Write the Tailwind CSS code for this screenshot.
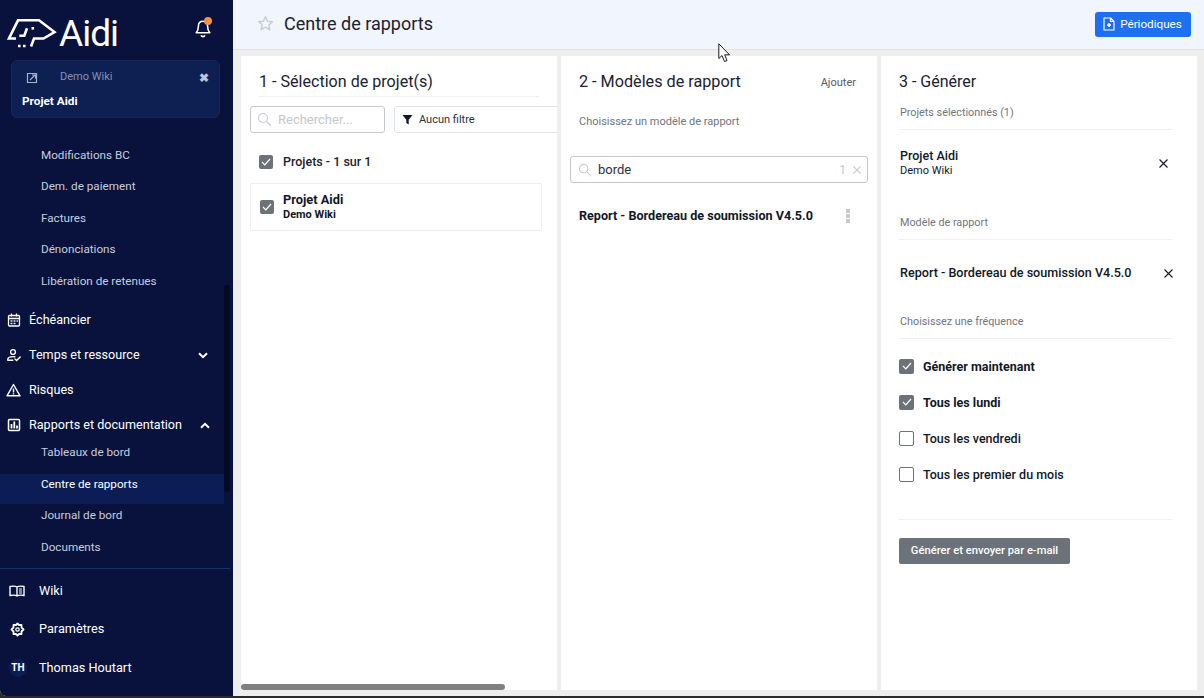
<!DOCTYPE html>
<html lang="fr">
<head>
  <meta charset="UTF-8" />
  <title>Centre de rapports</title>
  <script src="https://cdn.jsdelivr.net/npm/@tailwindcss/browser@4"></script>
</head>
<body class="bg-[#2b2b2b] font-['Roboto',sans-serif] text-[#111827]">
<div class="relative w-[1204px] h-[698px] overflow-hidden">
  <div class="flex h-[696px] bg-[#eeeeee] rounded-bl-[6px] overflow-hidden">

    <!-- Sidebar -->
    <aside class="w-[233px] shrink-0 h-full bg-[#08123d] text-white flex flex-col relative">
      <div class="h-[60px] shrink-0 flex items-start pl-[7px] pr-[21px] pt-[16px] justify-between">
        <div class="flex items-start gap-[2px]">
          <svg width="50" height="33" viewBox="0 0 50 33" fill="none" stroke="white" stroke-width="2.600" stroke-linejoin="miter" stroke-linecap="butt">
            <path d="M9 22.500H2L11 4.300H32L47.500 16L36.500 22.500H27L24 30.500"/>
            <path d="M20 12.300L17.300 19.700H12.300"/>
            <path d="M24.500 12.300h2.600" stroke-width="2.600"/>
            <path d="M11 30h2.600M16 30h2.600" stroke-width="2.600"/>
          </svg>
          <span class="text-[37px] leading-[36px] tracking-[-1px] font-normal">Aidi</span>
        </div>
        <div class="relative mt-[3px] mr-[1px]">
          <svg width="16" height="19" viewBox="0 0 16 19" fill="none" stroke="white" stroke-width="1.600" stroke-linejoin="round"><path d="M8 2.200c-3 0-4.600 2.200-4.600 5 0 3.600-1 5.300-2.200 6.500h13.600c-1.200-1.200-2.200-2.900-2.200-6.500 0-2.800-1.600-5-4.600-5z"/><path d="M6.200 16.200c.3 1 1 1.500 1.800 1.500s1.500-.5 1.800-1.500" stroke-width="1.800"/></svg>
          <span class="absolute -top-[2px] right-[-1px] w-[8px] h-[8px] rounded-full bg-[#f5914a]"></span>
        </div>
      </div>

      <div class="ml-[11px] mr-[13px] h-[58px] shrink-0 rounded-[6px] bg-[#0e1f52] border border-[#12265c] pl-[10px] pr-[10px] pt-[8px]">
        <div class="flex items-center h-[17px]">
          <svg width="12" height="12" viewBox="0 0 12 12" fill="none" stroke="#a8b2cc" stroke-width="1.200" class="ml-[4px]"><path d="M10.500 1.500h-9v9h9z" stroke-width="1.200"/><path d="M4 8l5-5M6 3h3.500v3.500" stroke-width="1.100"/></svg>
          <span class="ml-[22px] text-[11px] text-[#8792b1]">Demo Wiki</span>
          <span class="ml-auto text-[#b9c3db] text-[12px] leading-none font-bold">✖</span>
        </div>
        <div class="text-[11.800px] font-bold mt-[7px] leading-[16px]">Projet Aidi</div>
      </div>

      <nav class="flex-1 pt-[22px] text-[11.700px] text-[#c6cede]">
        <div class="h-[31.500px] flex items-center pl-[41px]">Modifications BC</div>
        <div class="h-[31.500px] flex items-center pl-[41px]">Dem. de paiement</div>
        <div class="h-[31.500px] flex items-center pl-[41px]">Factures</div>
        <div class="h-[31.500px] flex items-center pl-[41px]">Dénonciations</div>
        <div class="h-[31.500px] flex items-center pl-[41px]">Libération de retenues</div>

        <div class="mt-[5px] text-[12.600px] text-white">
          <div class="h-[35px] flex items-center pl-[7px]">
            <svg class="w-[14px] h-[14px]" viewBox="0 0 14 14" fill="none" stroke="white" stroke-width="1.300"><rect x="1.500" y="2.500" width="11" height="10.500" rx="1"/><path d="M1.500 5.500h11M4.500 0.500v3M9.500 0.500v3"/><path d="M3.500 8h2M6.500 8h2M9.500 8h1.500M3.500 10.500h2M6.500 10.500h2" stroke="#d9dfee"/></svg>
            <span class="ml-[8px]">Échéancier</span>
          </div>
          <div class="h-[35px] flex items-center pl-[7px]">
            <svg class="w-[14px] h-[14px]" viewBox="0 0 14 14" fill="none" stroke="white" stroke-width="1.400" stroke-linecap="round"><circle cx="6" cy="4" r="2.400"/><path d="M0.800 11.500c0-2 2.400-2.900 5.200-2.900 .8 0 1.200.1 1.800.2"/><path d="M0.800 12.200h5M8 11l1.600 1.500L13.200 9"/></svg>
            <span class="ml-[8px]">Temps et ressource</span>
            <svg class="ml-auto mr-[25px]" width="10" height="7" viewBox="0 0 10 7" fill="none" stroke="white" stroke-width="2"><path d="M1 1.200l4 4 4-4"/></svg>
          </div>
          <div class="h-[35px] flex items-center pl-[6px]">
            <svg class="w-[15px] h-[14px]" viewBox="0 0 15 14" fill="none" stroke="white" stroke-width="1.400" stroke-linejoin="round"><path d="M7.500 1.500L14 12.800H1z"/><path d="M7.500 5.500v4M7.500 10.200v1.200"/></svg>
            <span class="ml-[8px]">Risques</span>
          </div>
          <div class="h-[35px] flex items-center pl-[7px]">
            <svg class="w-[14px] h-[14px]" viewBox="0 0 14 14" fill="none" stroke="white" stroke-width="1.500"><rect x="1.500" y="1.500" width="11" height="11" rx="1"/><path d="M4.500 10.500V6M7.300 10.500V3.500M10 10.500V7.500" stroke-width="1.800"/></svg>
            <span class="ml-[8px]">Rapports et documentation</span>
            <svg class="ml-auto mr-[23px]" width="10" height="7" viewBox="0 0 10 7" fill="none" stroke="white" stroke-width="2"><path d="M1 5.800l4-4 4 4"/></svg>
          </div>
        </div>
        <div class="h-[21px] flex items-center pl-[41px]">Tableaux de bord</div>
        <div class="h-[30px] mt-[10px] mr-[9px] pb-[8px] flex items-center pl-[41px] bg-[#0c1d55] text-white">Centre de rapports</div>
        <div class="h-[28px] pb-[4px] flex items-center pl-[41px]">Journal de bord</div>
        <div class="h-[31.500px] pt-[1px] flex items-center pl-[41px]">Documents</div>
      </nav>

      <div class="h-[128px] shrink-0 mr-[3px] border-t border-[#15306d] text-[12.700px] text-white">
        <div class="h-[38px] mt-[3px] flex items-center pl-[9px]">
          <svg class="w-[16px] h-[14px]" viewBox="0 0 16 14" fill="none" stroke="white" stroke-width="1.400"><path d="M8 3C6.500 2 3.500 2 1 2.500v9c2.500-.5 5.500-.5 7 .5 1.500-1 4.500-1 7-.5v-9C12.500 2 9.500 2 8 3zM8 3v9"/><path d="M10 5h3M10 7h3M10 9h3" stroke-width="1"/></svg>
          <span class="ml-[14px]">Wiki</span>
        </div>
        <div class="h-[38px] flex items-center pl-[10px]">
          <svg class="w-[15px] h-[15px]" viewBox="0 0 15 15" fill="none" stroke="white" stroke-width="1.800" stroke-linejoin="round"><path d="M7.500 1.500l1.500 1.500h2.500v2.500L13.500 7.500l-2 2V12H9l-1.500 1.500L6 12H3.500V9.500l-2-2 2-2V3H6z"/><circle cx="7.500" cy="7.500" r="1.700" stroke-width="1.300"/></svg>
          <span class="ml-[14px]">Paramètres</span>
        </div>
        <div class="h-[39px] flex items-center pl-[9px]">
          <span class="w-[18px] h-[18px] rounded-full bg-[#0d1d52] flex items-center justify-center text-[10px] font-bold">TH</span>
          <span class="ml-[12px]">Thomas Houtart</span>
        </div>
      </div>

      <!-- scrollbar thumb -->
      <div class="absolute left-[224px] top-[285px] w-[6px] h-[207px] bg-[#040a24] rounded-full"></div>
    </aside>

    <!-- Main -->
    <main class="flex-1 min-w-0 flex flex-col relative">
      <header class="h-[50px] shrink-0 bg-[#f1f5fd] border-b border-[#e2e2e4] flex items-center pl-[24px] pr-[13px] pb-[2px]">
        <svg width="17" height="17" viewBox="0 0 24 24" fill="none" stroke="#c9ccd3" stroke-width="2" stroke-linejoin="round"><path d="M12 2.500l2.900 6.300 6.900.8-5.100 4.700 1.400 6.800L12 17.100 5.900 20.600l1.400-6.800L2.200 9.600l6.900-.8z"/></svg>
        <h1 class="ml-[10px] text-[18px] font-normal text-[#1c2130]">Centre de rapports</h1>
        <button class="ml-auto mt-[1px] h-[25px] w-[96px] pr-[1px] bg-[#1f6ff2] rounded-[3px] text-white text-[11.700px] flex items-center justify-center gap-[5px]">
          <svg width="12" height="14" viewBox="0 0 12 14" fill="none" stroke="white" stroke-width="1.200" stroke-linejoin="round"><path d="M1 1h6.500L11 4.500V13H1z"/><path d="M7.500 1v3.500H11"/><path d="M6 6v4M4 8h4" stroke-width="1.500"/></svg>
          <span class="pt-[1px]">Périodiques</span>
        </button>
      </header>

      <div class="flex-1 flex gap-[4px] pl-[8px] pt-[6px]">

        <!-- Panel 1 -->
        <section class="w-[316px] h-[634px] bg-white px-[9px] overflow-hidden">
          <h2 class="mx-[9px] text-[16.100px] h-[41px] pt-[15px] leading-[21px] font-normal text-[#1c2130] border-b border-[#eef0f2]">1 - Sélection de projet(s)</h2>
          <div class="flex gap-[9px] mt-[9px] w-[330px]">
            <div class="w-[135px] h-[27px] border border-[#c6c9d0] rounded-[3px] flex items-center pl-[6px]">
              <svg width="15" height="15" viewBox="0 0 15 15" fill="none" stroke="#c9ccd3" stroke-width="1.200"><circle cx="6" cy="6" r="4.500"/><path d="M9.500 9.500l4.500 4.500"/></svg>
              <span class="ml-[6px] text-[13px] text-[#c4c7cd]">Rechercher...</span>
            </div>
            <div class="flex-1 h-[27px] border border-[#e2e3e8] rounded-[3px] flex items-center pl-[7px]">
              <svg width="11" height="11" viewBox="0 0 11 11" fill="#111827"><path d="M0.500 1h10L6.700 5.800V10.500L4.300 9V5.800z"/></svg>
              <span class="ml-[6px] pt-[2px] text-[11px] text-[#2a3040]">Aucun filtre</span>
            </div>
          </div>
          <div class="flex items-center h-[20px] mt-[19px] ml-[9px]">
            <span class="w-[14px] h-[14px] rounded-[2px] bg-[#6c7279] flex items-center justify-center"><svg width="10" height="8" viewBox="0 0 10 8" fill="none" stroke="white" stroke-width="1.200"><path d="M1 4l2.800 2.800L9 1"/></svg></span>
            <span class="ml-[10px] text-[12.500px] font-medium text-[#1c2130]">Projets - 1 sur 1</span>
          </div>
          <div class="mt-[11px] w-[292px] h-[48px] border border-[#eeeeef] flex items-center pl-[9px]">
            <span class="w-[14px] h-[14px] rounded-[2px] bg-[#6c7279] flex items-center justify-center"><svg width="10" height="8" viewBox="0 0 10 8" fill="none" stroke="white" stroke-width="1.200"><path d="M1 4l2.800 2.800L9 1"/></svg></span>
            <div class="ml-[9px]">
              <div class="text-[12.800px] font-bold leading-[14px]">Projet Aidi</div>
              <div class="text-[11px] font-bold leading-[15px]">Demo Wiki</div>
            </div>
          </div>
        </section>

        <!-- Panel 2 -->
        <section class="w-[316px] h-[634px] bg-white px-[9px]">
          <div class="mx-[9px] flex justify-between h-[41px] pt-[15px] pr-[3px]">
            <h2 class="text-[16.200px] leading-[21px] font-normal text-[#1c2130]">2 - Modèles de rapport</h2>
            <span class="text-[11px] text-[#555b66] leading-[22px] pt-[1px]">Ajouter</span>
          </div>
          <div class="mx-[9px] mt-[17px] text-[11px] leading-[16px] text-[#6f7680]">Choisissez un modèle de rapport</div>
          <div class="mt-[26px] h-[27px] border border-[#c6c9d0] rounded-[3px] flex items-center pl-[7px] pr-[6px]">
            <svg width="14" height="14" viewBox="0 0 15 15" fill="none" stroke="#c9ccd3" stroke-width="1.200"><circle cx="6" cy="6" r="4.500"/><path d="M9.500 9.500l4.500 4.500"/></svg>
            <span class="ml-[6px] text-[13px] text-[#2a3040]">borde</span>
            <span class="ml-auto text-[12px] text-[#c4c7cd]">1</span>
            <svg class="ml-[7px]" width="8" height="8" viewBox="0 0 8 8" stroke="#c9ccd3" stroke-width="1.100"><path d="M0.500 0.500l7 7M7.500 0.500l-7 7"/></svg>
          </div>
          <div class="mx-[9px] mt-[20px] flex items-center justify-between pr-[9px] h-[26px]">
            <span class="text-[12.600px] font-bold text-[#111827]">Report - Bordereau de soumission V4.5.0</span>
            <span class="flex flex-col gap-[1px]"><i class="block w-[4px] h-[4px] bg-[#c9cbd0]"></i><i class="block w-[4px] h-[4px] bg-[#c9cbd0]"></i><i class="block w-[4px] h-[4px] bg-[#c9cbd0]"></i></span>
          </div>
        </section>

        <!-- Panel 3 -->
        <section class="w-[316px] h-[634px] bg-white pl-[18px] pr-[25px]">
          <h2 class="text-[16px] h-[41px] pt-[15px] leading-[21px] font-normal text-[#1c2130]">3 - Générer</h2>
          <div class="text-[10.800px] leading-[16px] text-[#6f7680] pt-[8px] pl-[1px] h-[33px] border-b border-[#eeeff1]">Projets sélectionnés (1)</div>
          <div class="relative h-[84px] pt-[18px] pl-[1px]">
            <div class="text-[12.500px] font-medium leading-[16px]">Projet Aidi</div>
            <div class="text-[11px] leading-[14px]">Demo Wiki</div>
            <svg class="absolute right-[4px] top-[29px]" width="9" height="9" viewBox="0 0 9 9" stroke="#111827" stroke-width="1.100"><path d="M0.500 0.500l8 8M8.500 0.500l-8 8"/></svg>
          </div>
          <div class="text-[10.800px] leading-[16px] pl-[1px] pt-[1px] text-[#6f7680] h-[26px] border-b border-[#eeeff1]">Modèle de rapport</div>
          <div class="flex items-start justify-between h-[73px] pt-[25px] pl-[1px] mr-[-1px]">
            <span class="text-[12.600px] font-medium leading-[16px]">Report - Bordereau de soumission V4.5.0</span>
            <svg class="mt-[4px]" width="9" height="9" viewBox="0 0 9 9" stroke="#111827" stroke-width="1.100"><path d="M0.500 0.500l8 8M8.500 0.500l-8 8"/></svg>
          </div>
          <div class="text-[10.800px] leading-[16px] pl-[1px] pt-[1px] text-[#6f7680] h-[26px] border-b border-[#eeeff1]">Choisissez une fréquence</div>
          <div class="pt-[9px] text-[12.500px]">
            <div class="h-[36px] flex items-center">
              <span class="w-[15px] h-[15px] rounded-[2px] bg-[#6c7279] flex items-center justify-center"><svg width="10" height="8" viewBox="0 0 10 8" fill="none" stroke="white" stroke-width="1.200"><path d="M1 4l2.800 2.800L9 1"/></svg></span>
              <span class="ml-[9px] pt-[2px] font-bold">Générer maintenant</span>
            </div>
            <div class="h-[36px] flex items-center">
              <span class="w-[15px] h-[15px] rounded-[2px] bg-[#6c7279] flex items-center justify-center"><svg width="10" height="8" viewBox="0 0 10 8" fill="none" stroke="white" stroke-width="1.200"><path d="M1 4l2.800 2.800L9 1"/></svg></span>
              <span class="ml-[9px] pt-[2px] font-bold">Tous les lundi</span>
            </div>
            <div class="h-[36px] flex items-center">
              <span class="w-[15px] h-[15px] rounded-[2px] border border-[#6c7279]"></span>
              <span class="ml-[9px] pt-[2px] font-medium">Tous les vendredi</span>
            </div>
            <div class="h-[36px] flex items-center">
              <span class="w-[15px] h-[15px] rounded-[2px] border border-[#6c7279]"></span>
              <span class="ml-[9px] pt-[2px] font-medium">Tous les premier du mois</span>
            </div>
          </div>
          <div class="mt-[27px] border-t border-[#eeeff1] pt-[17px]">
            <button class="h-[26px] w-[171px] rounded-[2px] bg-[#6c7279] text-white text-[11.200px] font-medium">Générer et envoyer par e-mail</button>
          </div>
        </section>
      </div>

      <!-- horizontal scrollbar -->
      <div class="absolute left-[8px] bottom-[6px] w-[264px] h-[6px] rounded-full bg-[#808080]"></div>
    </main>
  </div>

  <!-- mouse cursor -->
  <svg class="absolute left-[718px] top-[43px]" width="13" height="20" viewBox="0 0 13 20" fill="white" stroke="#1a1a1a" stroke-width="1"><path d="M0.800 0.800V15.500L4 12.500L6.500 18.500L9 17.500L6.700 11.800H11.500z"/></svg>
</div>
</body>
</html>
